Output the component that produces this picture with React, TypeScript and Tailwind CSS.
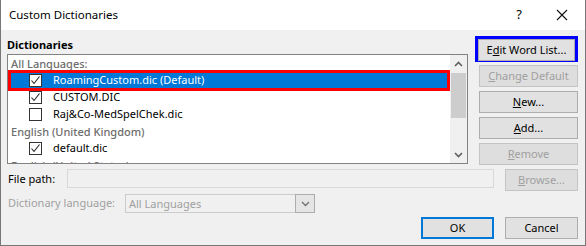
import React from "react";

const font = { fontFamily: '"Noto Sans", "Open Sans", sans-serif' };

function Check() {
  return (
    <svg width="11" height="11" viewBox="0 0 11 11" className="block">
      <polyline points="1.5,5.5 4,8.5 9.5,1.5" fill="none" stroke="#222" strokeWidth="1.1" />
    </svg>
  );
}

function CheckBox({ checked }: { checked: boolean }) {
  return (
    <div className="w-[13px] h-[13px] border border-[#333] bg-white flex items-center justify-center shrink-0">
      {checked && <Check />}
    </div>
  );
}

function Row({ label, checked }: { label: string; checked: boolean }) {
  return (
    <div className="h-[17px] flex items-center pl-[21px] gap-[11px] text-black whitespace-nowrap">
      <CheckBox checked={checked} />
      <span>{label}</span>
    </div>
  );
}

function Group({ label }: { label: string }) {
  return (
    <div className="h-[17px] leading-[17px] pl-[3px] font-medium text-[#6d6d6d] whitespace-nowrap">{label}</div>
  );
}

function Btn({
  children,
  disabled,
  className = "",
}: {
  children: React.ReactNode;
  disabled?: boolean;
  className?: string;
}) {
  return (
    <div
      className={`h-[22px] flex items-center justify-center border ${
        disabled ? "border-[#c4c4c4] bg-[#dedede] text-[#a0a0a0]" : "border-[#adadad] bg-[#e1e1e1] text-black"
      } ${className}`}
    >
      {children}
    </div>
  );
}

export default function App() {
  return (
    <div
      style={font}
      className="w-[586px] h-[246px] border-x border-b border-[#777] bg-[#f0f0f0] text-[11px] flex flex-col overflow-hidden"
    >
      {/* title bar */}
      <div className="h-[30px] bg-white flex items-center shrink-0">
        <span className="ml-[8px] text-[11.5px] text-black">Custom Dictionaries</span>
        <span className="ml-auto mr-[34px] text-[13px] text-black">?</span>
        <svg width="12" height="12" viewBox="0 0 12 12" className="mr-[17px]">
          <path d="M1 1 L11 11 M11 1 L1 11" stroke="#111" strokeWidth="1.1" />
        </svg>
      </div>

      <div className="pl-[6px] flex flex-col">
        {/* top section */}
        <div className="flex">
          <div className="w-[461px] pt-[7px] flex flex-col">
            <div className="h-[16px] leading-[16px] font-bold text-black">Dictionaries</div>
            <div className="mt-[1px] h-[110px] border border-[#828282] bg-white flex">
              <div className="flex-1 overflow-hidden">
                <Group label="All Languages:" />
                <div className="h-[21px] -my-[2px] border-[3px] border-[#ff0000] bg-[#0078d7] flex items-center pl-[18px] gap-[11px] text-white whitespace-nowrap relative">
                  <CheckBox checked />
                  <span>RoamingCustom.dic (Default)</span>
                </div>
                <Row label="CUSTOM.DIC" checked />
                <Row label="Raj&Co-MedSpelChek.dic" checked={false} />
                <Group label="English (United Kingdom)" />
                <Row label="default.dic" checked />
                <Group label="English (United States)" />
              </div>
              {/* scrollbar */}
              <div className="w-[17px] bg-[#f0f0f0] flex flex-col items-center">
                <div className="h-[17px] flex items-center justify-center">
                  <svg width="9" height="6" viewBox="0 0 9 6">
                    <polyline points="1,5 4.5,1.5 8,5" fill="none" stroke="#606060" strokeWidth="1.6" />
                  </svg>
                </div>
                <div className="w-[15px] h-[45px] bg-[#cdcdcd] mt-[1px]" />
                <div className="mt-auto h-[17px] flex items-center justify-center">
                  <svg width="9" height="6" viewBox="0 0 9 6">
                    <polyline points="1,1 4.5,4.5 8,1" fill="none" stroke="#606060" strokeWidth="1.6" />
                  </svg>
                </div>
              </div>
            </div>
          </div>

          <div className="ml-[7px] w-[103px] pt-[6px] flex flex-col gap-[4px]">
            <div className="h-[26px] border-[3px] border-[#0000ff] -mb-[1px]">
              <Btn className="h-[20px]">
                <span>
                  E<u>d</u>it Word List...
                </span>
              </Btn>
            </div>
            <Btn disabled className="ml-[4px]">
              <span>
                <u>C</u>hange Default
              </span>
            </Btn>
            <Btn className="ml-[4px]">
              <span>
                <u>N</u>ew...
              </span>
            </Btn>
            <Btn className="ml-[4px]">
              <span>
                <u>A</u>dd...
              </span>
            </Btn>
            <Btn disabled className="ml-[4px]">
              <span>
                <u>R</u>emove
              </span>
            </Btn>
          </div>
        </div>

        {/* file path */}
        <div className="mt-[4px] flex items-start h-[22px]">
          <div className="w-[60px] pl-[1px] leading-[18px] pt-[1px] text-black">File path:</div>
          <div className="w-[427px] h-[19px] border border-[#d9d9d9] bg-[#f0f0f0]" />
          <Btn disabled className="ml-[11px] w-[73px]">
            <span>
              <u>B</u>rowse...
            </span>
          </Btn>
        </div>

        {/* dictionary language */}
        <div className="mt-[3px] flex items-center h-[19px]">
          <div className="w-[118px] pl-[1px] text-[#a0a0a0]">Dictionary language:</div>
          <div className="w-[190px] h-[19px] border border-[#cccccc] bg-[#f0f0f0] flex">
            <span className="flex-1 pl-[3px] leading-[17px] text-[#a0a0a0]">All Languages</span>
            <div className="w-[20px] -my-[1px] -mr-[1px] border border-[#adadad] bg-[#e5e5e5] flex items-center justify-center">
              <svg width="9" height="6" viewBox="0 0 9 6">
                <polyline points="1,1 4.5,4.5 8,1" fill="none" stroke="#707070" strokeWidth="1.3" />
              </svg>
            </div>
          </div>
        </div>

        {/* ok / cancel */}
        <div className="mt-[4px] flex">
          <div className="ml-[414px] w-[73px] h-[22px] border-2 border-[#0078d7] bg-[#e1e1e1] flex items-center justify-center text-black">
            OK
          </div>
          <Btn className="ml-[11px] w-[73px]">Cancel</Btn>
        </div>
      </div>
    </div>
  );
}
